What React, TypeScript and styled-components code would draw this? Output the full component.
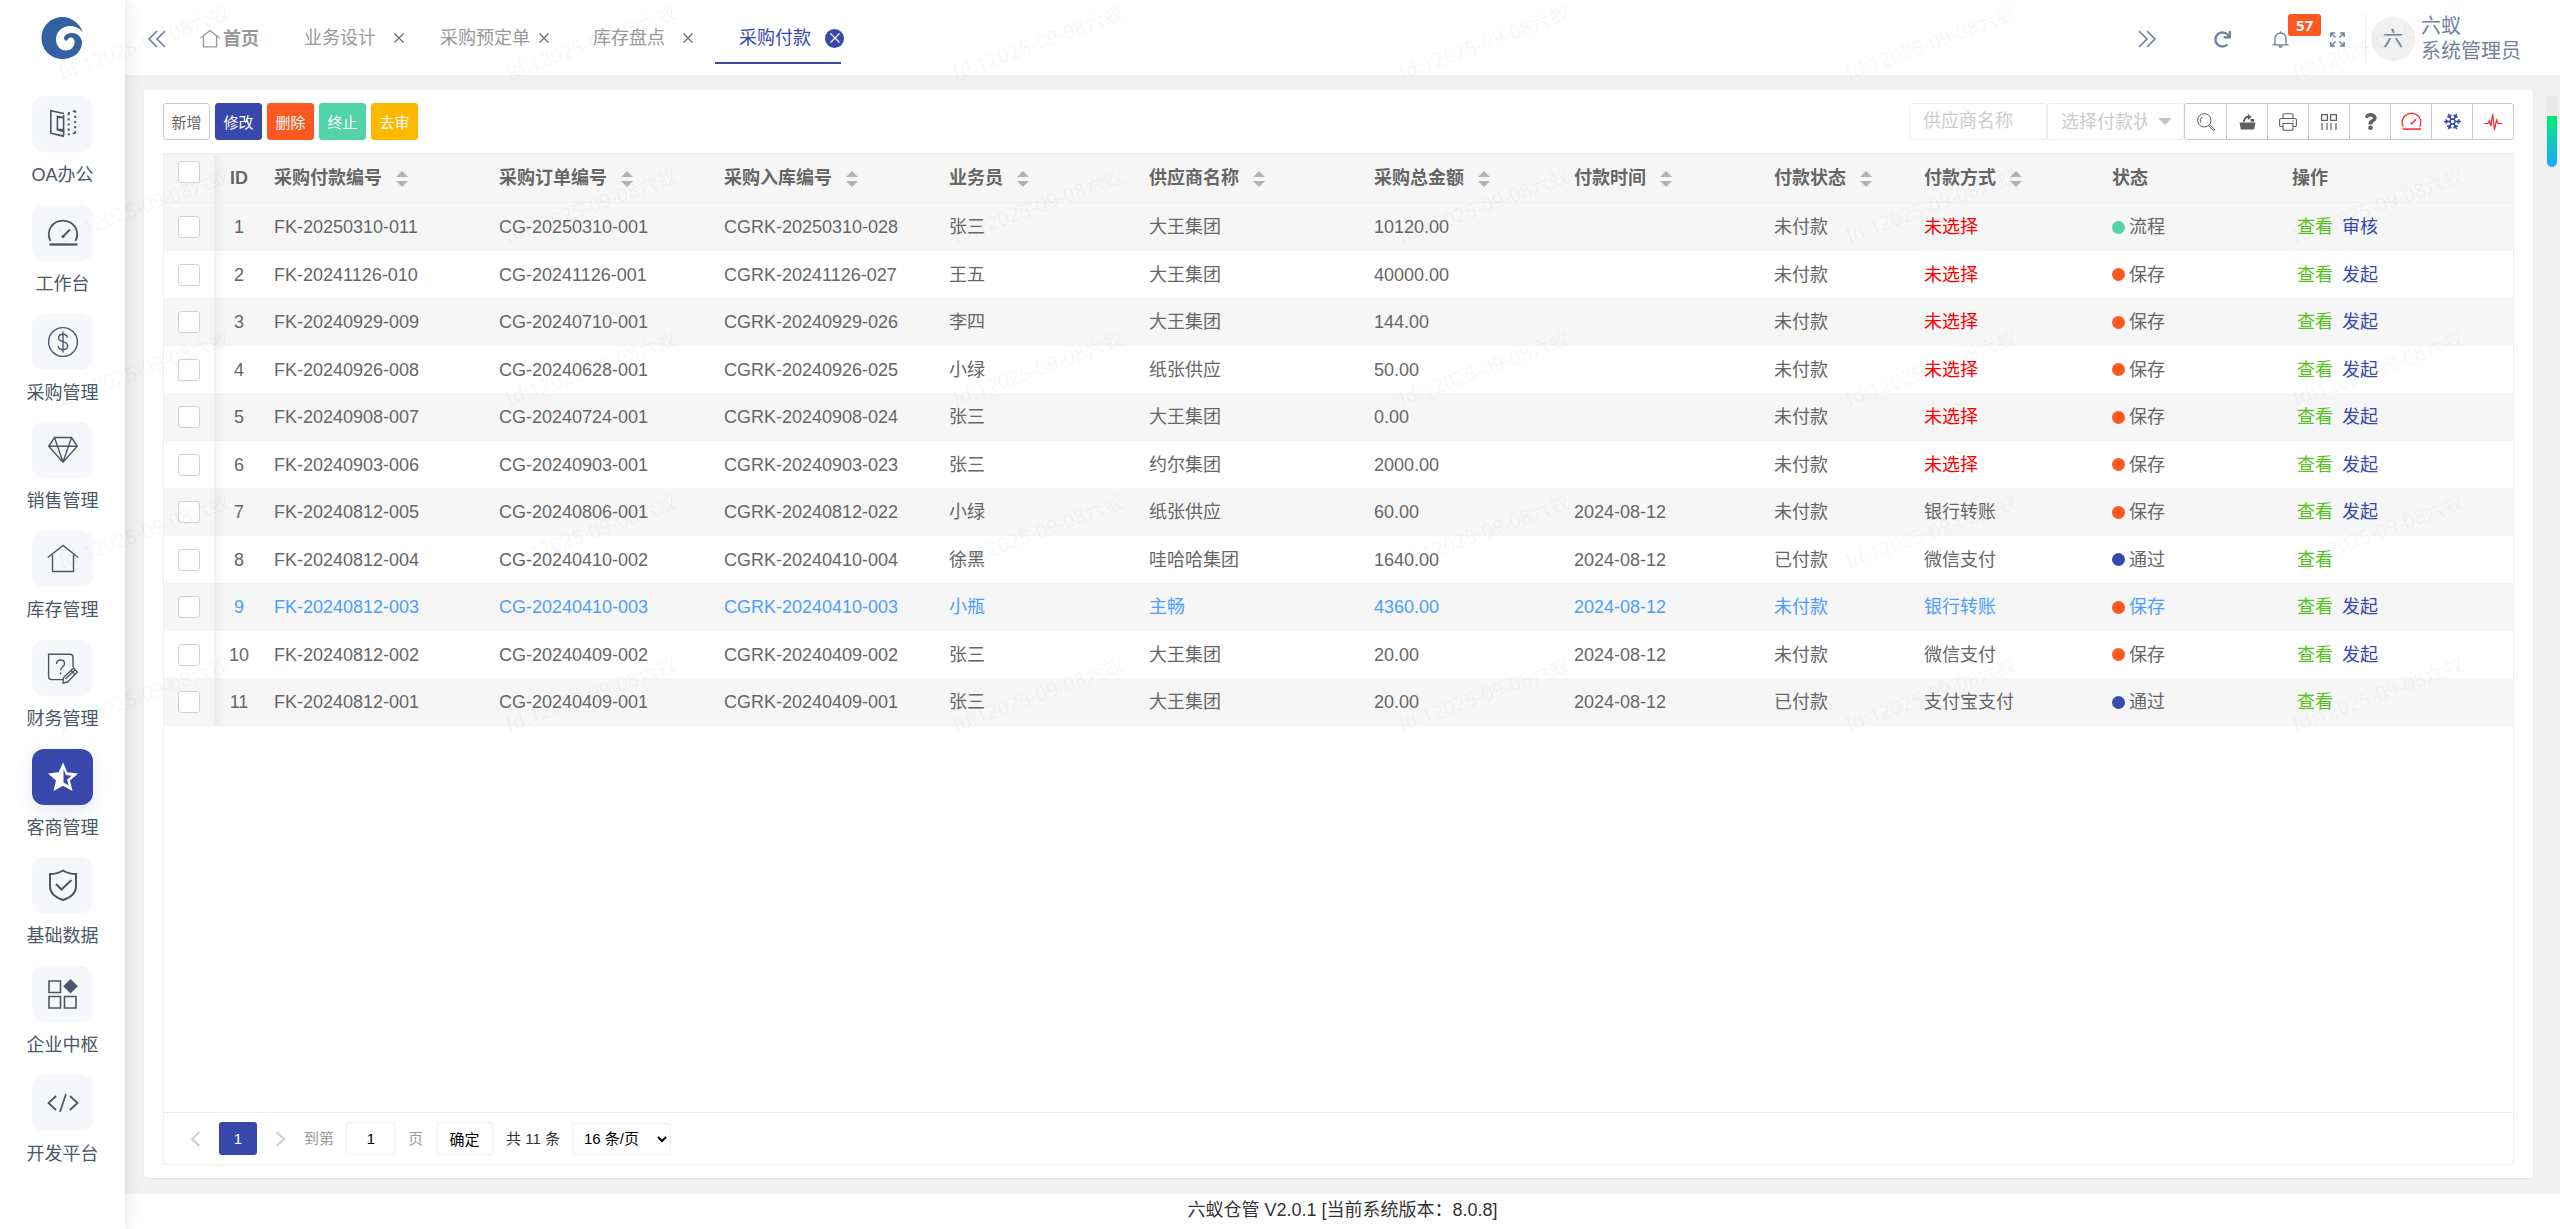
import React from "react";
import styled, { createGlobalStyle } from "styled-components";
import { FaQuestion, FaRedo } from "react-icons/fa";
import { Snowflake } from "lucide-react";

const color = {
  primary: "#3949ab",
  danger: "#ff5722",
  green: "#52d3aa",
  yellow: "#ffb800",
  text: "#666",
  muted: "#999",
  slate: "#74829c",
  ink: "#4b5768",
  line: "#eee",
  stripe: "#f6f6f6",
  page: "#f1f1f1",
};

const GlobalStyle = createGlobalStyle`
  *, *::before, *::after { box-sizing: border-box; }
  body {
    margin: 0;
    background: #fff;
    color: ${color.text};
    font-family: "Liberation Sans", "Noto Sans CJK SC", sans-serif;
    font-size: 18px;
    line-height: 26px;
  }
  button, input, select { font-family: inherit; margin: 0; }
  a { text-decoration: none; color: inherit; }
  svg { display: block; flex: none; }
`;

/* ---------- shell ---------- */

const Shell = styled.div`
  position: relative;
  display: flex;
  min-height: 100vh;
`;

const Sidebar = styled.aside`
  position: relative;
  z-index: 2;
  flex: none;
  width: 125px;
  display: flex;
  flex-direction: column;
  align-items: center;
  padding: 17px 0 62px;
  background: #fff;
  box-shadow: 2px 0 14px rgba(0, 0, 0, 0.1);
`;

const Nav = styled.nav`
  flex: 1;
  display: flex;
  flex-direction: column;
  justify-content: space-between;
  gap: 8px;
  margin-top: 37px;
`;

const NavItem = styled.a`
  display: flex;
  flex-direction: column;
  align-items: center;
  gap: 10px;
  color: ${color.ink};
`;

const NavTile = styled.span<{ $active: boolean }>`
  display: flex;
  align-items: center;
  justify-content: center;
  width: 61px;
  height: 56px;
  border-radius: 12px;
  background: ${(p) => (p.$active ? color.primary : "#f5f7fb")};
  color: ${(p) => (p.$active ? "#fff" : color.ink)};
  box-shadow: ${(p) => (p.$active ? "0 6px 16px rgba(57, 73, 171, 0.12)" : "none")};
`;

const Main = styled.div`
  flex: 1;
  min-width: 0;
  display: flex;
  flex-direction: column;
`;

/* ---------- header ---------- */

const Header = styled.header`
  position: relative;
  display: flex;
  align-items: center;
  height: 75px;
  padding: 3px 39px 0 23px;
  background: #fff;
  color: ${color.slate};
  box-shadow: 0 1px 2px rgba(0, 0, 0, 0.05);
`;

const PlainButton = styled.button`
  display: flex;
  padding: 0;
  border: 0;
  background: none;
  color: inherit;
  cursor: pointer;
`;

const HomeLink = styled.a`
  display: flex;
  align-items: center;
  gap: 3px;
  width: 80px;
  margin-left: 34px;
  font-weight: bold;
  color: ${color.muted};
`;

const TabStrip = styled.div`
  flex: 1;
  display: flex;
  height: 50px;
`;

const Tab = styled.div<{ $width: number; $gap: number; $active: boolean }>`
  display: flex;
  align-items: center;
  gap: ${(p) => p.$gap}px;
  width: ${(p) => p.$width}px;
  padding-left: 24px;
  white-space: nowrap;
  color: ${(p) => (p.$active ? color.primary : color.muted)};
  border-bottom: 2px solid ${(p) => (p.$active ? color.primary : "transparent")};
`;

const TabClose = styled.button<{ $active: boolean }>`
  flex: none;
  display: flex;
  align-items: center;
  justify-content: center;
  width: ${(p) => (p.$active ? 19 : 10)}px;
  height: 19px;
  padding: 0;
  border: 0;
  border-radius: 50%;
  background: ${(p) => (p.$active ? color.primary : "transparent")};
  color: ${(p) => (p.$active ? "#fff" : color.text)};
`;

const HeaderTools = styled.div`
  display: flex;
  align-items: center;
  margin-left: 58px;
`;

const BellWrap = styled.div`
  position: relative;
  margin: 0 41px;
`;

const Badge = styled.span`
  position: absolute;
  left: 16px;
  top: -17px;
  width: 33px;
  border-radius: 3px;
  background: ${color.danger};
  color: #fff;
  font: bold 15px/22px "Noto Sans", sans-serif;
  text-align: center;
`;

const UserBox = styled.div`
  display: flex;
  align-items: center;
  gap: 6px;
  margin-left: 20px;
  padding-left: 5px;
  border-left: 1px solid ${color.line};
  height: 50px;
  font-size: 20px;
  line-height: 25px;
`;

const Avatar = styled.span`
  width: 44px;
  border-radius: 50%;
  background: ${color.page};
  line-height: 44px;
  text-align: center;
`;

/* ---------- content ---------- */

const Content = styled.main`
  position: relative;
  flex: 1;
  display: flex;
  padding: 15px 27px 16px 19px;
  background: ${color.page};
`;

const Card = styled.section`
  flex: 1;
  min-width: 0;
  display: flex;
  flex-direction: column;
  gap: 13px;
  padding: 13px 19px;
  border-radius: 3px;
  background: #fff;
  box-shadow: 0 1px 2px rgba(0, 0, 0, 0.06);
`;

const ScrollTrack = styled.div`
  position: absolute;
  top: 20px;
  right: 3px;
  width: 10px;
  height: 72px;
  padding-top: 21px;
  border-radius: 5px;
  background: #e9e9e9;
`;

const ScrollThumb = styled.div`
  height: 51px;
  border-radius: 0 0 5px 5px;
  background: linear-gradient(#00ef70, #1aa7ff);
`;

const Toolbar = styled.div`
  display: flex;
  justify-content: space-between;
`;

const Actions = styled.div`
  display: flex;
  gap: 5px;
`;

const ActionButton = styled.button<{ $fill?: string }>`
  width: 47px;
  height: 37px;
  padding: 0;
  border: 1px solid ${(p) => p.$fill || "#c9c9c9"};
  border-radius: 3px;
  background: ${(p) => p.$fill || "#fff"};
  color: ${(p) => (p.$fill ? "#fff" : color.text)};
  font-size: 15px;
`;

const Filters = styled.div`
  display: flex;
`;

const FilterInput = styled.input`
  width: 138px;
  height: 37px;
  padding: 0 13px;
  border: 1px solid ${color.line};
  border-radius: 3px;
  font-size: 18px;
  color: ${color.text};
  &::placeholder { color: #ccc; }
`;

const FilterSelectBox = styled.div`
  position: relative;
  display: flex;
  align-items: center;
`;

const FilterSelect = styled.select`
  appearance: none;
  width: 137px;
  height: 37px;
  padding: 0 36px 0 13px;
  border: 1px solid ${color.line};
  border-radius: 3px;
  background: #fff;
  font-size: 18px;
  color: #ccc;
`;

const Caret = styled.span`
  position: absolute;
  right: 12px;
  border: 7px solid transparent;
  border-top-color: #c2c2c2;
  border-bottom: 0;
  pointer-events: none;
`;

const IconGroup = styled.div`
  display: flex;
  border: 1px solid #c9c9c9;
  border-radius: 3px;
`;

const IconButton = styled.button<{ $tone?: string }>`
  display: flex;
  align-items: center;
  justify-content: center;
  width: 41px;
  height: 35px;
  padding: 0;
  border: 0;
  background: none;
  color: ${(p) => p.$tone || "#5f5f5f"};
  & + & { border-left: 1px solid #c9c9c9; }
`;

/* ---------- table ---------- */

const TablePanel = styled.div`
  flex: 1;
  display: flex;
  flex-direction: column;
  border: 1px solid ${color.line};
`;

const TableScroll = styled.div`
  flex: 1;
  overflow-x: auto;
`;

const Table = styled.table`
  width: 100%;
  min-width: 2200px;
  table-layout: fixed;
  border-spacing: 0;
`;

const Row = styled.tr<{ $hot?: boolean }>`
  height: 47px;
  color: ${(p) => (p.$hot ? "#4d9dff" : "inherit")};
  &:nth-child(odd) { height: 48px; background: ${color.stripe}; }
`;

const HeadCell = styled.th`
  height: 49px;
  padding: 0 10px;
  background: ${color.stripe};
  border-bottom: 1px solid ${color.line};
  text-align: left;
  white-space: nowrap;
`;

const Cell = styled.td`
  padding: 0 10px;
  white-space: nowrap;
`;

const pinned = `
  position: relative;
  padding: 0 14px;
  &::after {
    content: "";
    position: absolute;
    top: 0;
    bottom: 0;
    left: 100%;
    width: 10px;
    background: linear-gradient(to right, rgba(0, 0, 0, 0.05), transparent);
  }
`;

const PinnedHead = styled(HeadCell)`
  ${pinned}
  padding-top: 7px;
  vertical-align: top;
`;

const PinnedCell = styled(Cell)`
  ${pinned}
`;

const IdHead = styled(HeadCell)`
  text-align: center;
`;

const IdCell = styled(Cell)`
  text-align: center;
`;

const Check = styled.input`
  appearance: none;
  display: block;
  width: 22px;
  height: 22px;
  margin: 0;
  border: 1px solid #d2d2d2;
  border-radius: 3px;
  background: #fff;
`;

const HeadLabel = styled.span`
  display: flex;
  align-items: center;
  gap: 14px;
`;

const SortButton = styled.button`
  display: flex;
  flex-direction: column;
  gap: 4px;
  padding: 2px 0 0;
  border: 0;
  background: none;
  &::before, &::after { content: ""; border: 6px solid transparent; }
  &::before { border-top: 0; border-bottom-color: #b2b2b2; }
  &::after { border-bottom: 0; border-top-color: #b2b2b2; }
`;

const Unset = styled.span`
  color: red;
`;

const Status = styled.span<{ $dot: string }>`
  display: flex;
  align-items: center;
  gap: 4px;
  &::before {
    content: "";
    width: 13px;
    height: 13px;
    border-radius: 50%;
    background: ${(p) => p.$dot};
  }
`;

const RowLinks = styled.span`
  display: flex;
  gap: 9px;
  padding-left: 5px;
`;

const RowLink = styled.a<{ $tone: string }>`
  color: ${(p) => p.$tone};
`;

/* ---------- pager ---------- */

const Pager = styled.div`
  display: flex;
  align-items: center;
  height: 52px;
  padding-left: 26px;
  border-top: 1px solid ${color.line};
  font-size: 15px;
  color: #333;
`;

const PageStep = styled(PlainButton)`
  color: #ccc;
`;

const PageNumber = styled.button`
  width: 38px;
  height: 33px;
  margin: 0 18px;
  padding: 0;
  border: 0;
  border-radius: 3px;
  background: ${color.primary};
  color: #fff;
  font-size: 15px;
`;

const JumpLabel = styled.label`
  display: flex;
  align-items: center;
  gap: 12px;
  margin: 0 13px 0 18px;
  color: ${color.muted};
`;

const JumpInput = styled.input`
  width: 50px;
  height: 33px;
  padding: 0;
  border: 1px solid ${color.line};
  border-radius: 3px;
  font-size: 15px;
  text-align: center;
`;

const JumpButton = styled.button`
  width: 57px;
  height: 33px;
  margin-right: 13px;
  padding: 0;
  border: 1px solid ${color.line};
  border-radius: 3px;
  background: #fff;
  color: #000;
  font-size: 15px;
`;

const SizeSelect = styled.select`
  width: 99px;
  height: 32px;
  margin-left: 12px;
  padding: 0 0 0 7px;
  border: 1px solid ${color.line};
  border-radius: 3px;
  background: #fff;
  color: #000;
  font-size: 15px;
`;

const Footer = styled.footer`
  height: 35px;
  color: #333;
  line-height: 33px;
  text-align: center;
`;

/* ---------- watermark ---------- */

const WatermarkLayer = styled.div`
  position: absolute;
  z-index: 3;
  top: 30px;
  left: 52px;
  right: 90px;
  display: grid;
  row-gap: 137px;
  pointer-events: none;
`;

const WatermarkRow = styled.div`
  display: flex;
  justify-content: space-between;
`;

const WatermarkText = styled.span`
  width: 184px;
  height: 26px;
  white-space: nowrap;
  font: 20px/26px "Noto Sans", "Noto Sans CJK SC", sans-serif;
  text-align: center;
  color: rgba(0, 0, 0, 0.045);
  transform: rotate(-20deg);
`;

/* ---------- icons ---------- */

type IconProps = { size?: number; box?: number; width?: number; children: React.ReactNode };

const Stroke = ({ size = 32, box = 32, width = 1.4, children }: IconProps) => (
  <svg width={size} height={size} viewBox={`0 0 ${box} ${box}`} fill="none" stroke="currentColor" strokeWidth={width} aria-hidden="true">
    {children}
  </svg>
);

const Logo = () => (
  <svg width="43" height="42" viewBox="0 0 42 42" role="img" aria-label="六蚁">
    <path
      fill="#3262a3"
      d="M41.5 15.5C38 6 30 0 21 0C9 0 0 9.5 0 21C0 33 9.5 42 21 42C32 42 40 35 40.5 26C40.5 20 36 16 30.5 16C26 16 22.5 18.5 22.5 21C22.5 23 24 24 25.5 23.5C26 22 27.500 20.500 29.500 20.500C32 20.500 33.500 23 33 26C32.500 30.500 29 33.500 24.500 33.500C19 33.500 14.500 29 14.500 22.500C14.500 14.500 21 9 28.500 9C34 9 38.500 11.500 41.500 15.500Z"
    />
  </svg>
);

const DoorIcon = () => (
  <Stroke width={1.6}>
    <path d="M17 5.5L3.8 2.8V25.2L17 28.4M3.8 25.2L17 28M16.6 7V28M16.6 9.5H10.4V21.5H16.6M16.6 9.5L10.4 8.5V22L16.6 23.6" />
    <path d="M21.7 5V27M28.2 2.5V26" strokeDasharray="2.2 3" strokeWidth="2" />
    <path d="M21 5.2L28 2.8M21 26.6L28 25" strokeDasharray="2 3" />
  </Stroke>
);

const GaugeIcon = ({ size = 32 }: { size?: number }) => (
  <Stroke size={size} width={1.8}>
    <path d="M3.5 24C-1.5 14 5.5 3.6 16 3.6S33.5 14 28.5 24" />
    <path d="M2.5 27.5H30.5" strokeWidth="2.3" />
    <path d="M16.5 19L23 12.5" strokeWidth="2" />
    <circle cx="16" cy="19.5" r="1.6" fill="currentColor" stroke="none" />
  </Stroke>
);

const DollarIcon = () => (
  <Stroke>
    <circle cx="16" cy="16" r="14.4" />
    <path d="M20.5 11.5C20 9.3 18.3 8.3 16 8.3C13.4 8.3 11.6 9.7 11.6 11.9C11.6 16.6 20.7 14.5 20.7 19.8C20.7 22.2 18.7 23.7 16 23.7C13.3 23.7 11.5 22.3 11.2 19.9M16 5.5V26.5" />
  </Stroke>
);

const DiamondIcon = () => (
  <Stroke>
    <path d="M7.5 3.5H24.5L30.3 12.3L16 28.3L1.7 12.3ZM1.7 12.3H30.3M7.5 3.5L10.5 12.3L16 28M24.5 3.5L21.5 12.3L16 28" />
  </Stroke>
);

const HouseIcon = ({ size = 32, width = 1.4 }: { size?: number; width?: number }) => (
  <Stroke size={size} width={width}>
    <path d="M.8 14.5L16 2.5L31.2 14.5M5.5 12V28.5H26.5V12" />
  </Stroke>
);

const FinanceIcon = () => (
  <Stroke>
    <path d="M17 27.6H4.5A3 3 0 0 1 1.6 24.6V2.2H23A3 3 0 0 1 26 5.2V15" />
    <path d="M9.5 12C9.5 9.5 11 8 13.5 8S17.5 9.6 17.5 11.7C17.5 14.8 13.6 14.8 13.6 18.5M13.6 20.5V22.5" />
    <path d="M16.5 25.5L26.5 16L30.3 20L20.5 30L16 31ZM18.5 27L27.5 18.2M24 18.5L28 22.5" />
  </Stroke>
);

const StarHalfIcon = () => (
  <svg width="32" height="32" viewBox="0 0 32 32" aria-hidden="true">
    <path
      fill="currentColor"
      fillRule="evenodd"
      d="M16 1.5L20.3 11.3L31 12.4L23 19.6L25.5 30L16 24.7L6.5 30L9 19.6L1 12.4L11.7 11.3ZM16.5 8V21.5L21.5 24.2L20.2 18.6L24.6 14.7L18.8 14Z"
    />
  </svg>
);

const ShieldIcon = () => (
  <Stroke width={2}>
    <path d="M16 1.5C19.5 3.7 24 5 29 5V17.5C29 24 23.5 28.5 16 31C8.5 28.5 3 24 3 17.5V5C8 5 12.5 3.7 16 1.5Z" />
    <path d="M9 15L14.5 20.5L24.5 11" />
  </Stroke>
);

const BlocksIcon = () => (
  <Stroke width={1.6}>
    <path d="M2 3H13.5V14.5H2ZM2 18.5H13.5V30H2ZM17.5 18.5H29V30H17.5Z" />
    <path d="M23.5 1L30.8 8.3L23.5 15.6L16.2 8.3Z" fill="currentColor" stroke="none" />
  </Stroke>
);

const CodeIcon = () => (
  <Stroke width={1.8}>
    <path d="M9 9L1.5 16L9 23M23 9L30.5 16L23 23M19 7L13 25" />
  </Stroke>
);

const DoubleChevron = ({ flip }: { flip?: boolean }) => (
  <Stroke size={18} box={18}>
    <path d={flip ? "M1 1L9 9L1 17M9 1L17 9L9 17" : "M9 1L1 9L9 17M17 1L9 9L17 17"} strokeWidth="1.7" />
  </Stroke>
);

const Cross = () => (
  <Stroke size={10} box={10} width={1.1}>
    <path d="M.5.5L9.5 9.5M9.5.5L.5 9.5" />
  </Stroke>
);

const BellIcon = () => (
  <Stroke size={17} box={17} width={1.4}>
    <path d="M3 13.5V7.5A5.5 5.5 0 0 1 14 7.5V13.5M.3 13.9H16.7M8.5 2V.3" />
    <path d="M6 14.5H11L9.7 16.7H7.3Z" fill="currentColor" stroke="none" />
  </Stroke>
);

const FullscreenIcon = () => (
  <Stroke size={15} box={15} width={1.5}>
    <path d="M.9 5V.9H5M10 .9H14.1V5M14.1 10V14.1H10M5 14.1H.9V10M1 1L5.5 5.5M14 1L9.5 5.5M14 14L9.5 9.5M1 14L5.5 9.5" />
  </Stroke>
);

const SearchIcon = () => (
  <Stroke size={18} box={18} width={1}>
    <circle cx="7.3" cy="7.3" r="6.7" />
    <path d="M4 9.5A4.3 4.3 0 0 1 5 4" />
    <path d="M12.2 13.3L13.3 12.2L17.3 16A.9.9 0 0 1 16 17.4Z" />
  </Stroke>
);

const ExportIcon = () => (
  <svg width="17" height="17" viewBox="0 0 17 17" fill="currentColor" aria-hidden="true">
    <path d="M.5 9.5H16.5L15.2 16.5H1.800ZM4 8.8V6.5H5.5V8.8ZM11.5 8.8V6H15V8.8ZM5 7C5 4 6.5 2.8 9 2.8V.7L12.5 4L9 7V5C7.3 5 6.3 5.8 6 8.8H5Z" />
  </svg>
);

const PrintIcon = () => (
  <Stroke size={18} box={18} width={1.1}>
    <path d="M4 5.5V1.7A1 1 0 0 1 5 .7H13A1 1 0 0 1 14 1.7V5.5M4 13.5H2A1.4 1.4 0 0 1 .6 12V7A1.4 1.4 0 0 1 2 5.5H16A1.4 1.4 0 0 1 17.4 7V12A1.4 1.4 0 0 1 16 13.5H14M4 10.5H14V16.3A1 1 0 0 1 13 17.3H5A1 1 0 0 1 4 16.3ZM13.5 8H15" />
  </Stroke>
);

const ColumnsIcon = () => (
  <Stroke size={18} box={18} width={1.2}>
    <path d="M1.6 1.6H7.4V7.4H1.6ZM10.6 1.6H16.4V7.4H10.6ZM2 10V17M7 10V17M11 10V17M16 10V17" />
  </Stroke>
);

const PulseIcon = () => (
  <Stroke size={18} box={18} width={1.2}>
    <path d="M0 10.5H4L5.5 8L7 13L8.7 1L10.5 17L12.5 7L14 10.5H18" />
  </Stroke>
);

const Chevron = ({ flip }: { flip?: boolean }) => (
  <svg width="11" height="16" viewBox="0 0 11 16" fill="none" stroke="currentColor" strokeWidth="1.8" aria-hidden="true">
    <path d={flip ? "M1.5 1L9 8L1.5 15" : "M9.5 1L2 8L9.5 15"} />
  </svg>
);

/* ---------- data ---------- */

const navItems = [
  { label: "OA办公", icon: <DoorIcon /> },
  { label: "工作台", icon: <GaugeIcon /> },
  { label: "采购管理", icon: <DollarIcon /> },
  { label: "销售管理", icon: <DiamondIcon /> },
  { label: "库存管理", icon: <HouseIcon /> },
  { label: "财务管理", icon: <FinanceIcon /> },
  { label: "客商管理", icon: <StarHalfIcon />, active: true },
  { label: "基础数据", icon: <ShieldIcon /> },
  { label: "企业中枢", icon: <BlocksIcon /> },
  { label: "开发平台", icon: <CodeIcon /> },
];

const tabs = [
  { label: "业务设计", width: 136, gap: 18 },
  { label: "采购预定单", width: 153, gap: 9 },
  { label: "库存盘点", width: 146, gap: 18 },
  { label: "采购付款", width: 126, gap: 14, active: true },
];

const actions = [
  { label: "新增" },
  { label: "修改", fill: color.primary },
  { label: "删除", fill: color.danger },
  { label: "终止", fill: color.green },
  { label: "去审", fill: color.yellow },
];

const tools = [
  { label: "搜索", icon: <SearchIcon /> },
  { label: "导出", icon: <ExportIcon /> },
  { label: "打印", icon: <PrintIcon /> },
  { label: "筛选列", icon: <ColumnsIcon /> },
  { label: "帮助", icon: <FaQuestion size={17} /> },
  { label: "仪表盘", icon: <GaugeIcon size={21} />, tone: "#f22" },
  { label: "冻结", icon: <Snowflake size={19} />, tone: color.primary },
  { label: "监控", icon: <PulseIcon />, tone: "#f22" },
];

const sortable = [
  { label: "采购付款编号", width: 225 },
  { label: "采购订单编号", width: 225 },
  { label: "采购入库编号", width: 225 },
  { label: "业务员", width: 200 },
  { label: "供应商名称", width: 225 },
  { label: "采购总金额", width: 200 },
  { label: "付款时间", width: 200 },
  { label: "付款状态", width: 150 },
  { label: "付款方式", width: 188 },
];

const dots: Record<string, string> = { 流程: color.green, 保存: color.danger, 通过: color.primary };

const rows = [
  ["FK-20250310-011", "CG-20250310-001", "CGRK-20250310-028", "张三", "大王集团", "10120.00", "", "未付款", "", "流程", "审核"],
  ["FK-20241126-010", "CG-20241126-001", "CGRK-20241126-027", "王五", "大王集团", "40000.00", "", "未付款", "", "保存", "发起"],
  ["FK-20240929-009", "CG-20240710-001", "CGRK-20240929-026", "李四", "大王集团", "144.00", "", "未付款", "", "保存", "发起"],
  ["FK-20240926-008", "CG-20240628-001", "CGRK-20240926-025", "小绿", "纸张供应", "50.00", "", "未付款", "", "保存", "发起"],
  ["FK-20240908-007", "CG-20240724-001", "CGRK-20240908-024", "张三", "大王集团", "0.00", "", "未付款", "", "保存", "发起"],
  ["FK-20240903-006", "CG-20240903-001", "CGRK-20240903-023", "张三", "约尔集团", "2000.00", "", "未付款", "", "保存", "发起"],
  ["FK-20240812-005", "CG-20240806-001", "CGRK-20240812-022", "小绿", "纸张供应", "60.00", "2024-08-12", "未付款", "银行转账", "保存", "发起"],
  ["FK-20240812-004", "CG-20240410-002", "CGRK-20240410-004", "徐黑", "哇哈哈集团", "1640.00", "2024-08-12", "已付款", "微信支付", "通过", ""],
  ["FK-20240812-003", "CG-20240410-003", "CGRK-20240410-003", "小瓶", "主畅", "4360.00", "2024-08-12", "未付款", "银行转账", "保存", "发起"],
  ["FK-20240812-002", "CG-20240409-002", "CGRK-20240409-002", "张三", "大王集团", "20.00", "2024-08-12", "未付款", "微信支付", "保存", "发起"],
  ["FK-20240812-001", "CG-20240409-001", "CGRK-20240409-001", "张三", "大王集团", "20.00", "2024-08-12", "已付款", "支付宝支付", "通过", ""],
];

const hotRow = 8;

/* ---------- parts ---------- */

const SideNav = () => (
  <Sidebar>
    <Logo />
    <Nav>
      {navItems.map((item) => (
        <NavItem key={item.label} href="#">
          <NavTile $active={!!item.active}>{item.icon}</NavTile>
          {item.label}
        </NavItem>
      ))}
    </Nav>
  </Sidebar>
);

const TopBar = () => (
  <Header>
    <PlainButton aria-label="向左滚动"><DoubleChevron /></PlainButton>
    <HomeLink href="#"><HouseIcon size={20} width={2.2} />首页</HomeLink>
    <TabStrip>
      {tabs.map((tab) => (
        <Tab key={tab.label} $width={tab.width} $gap={tab.gap} $active={!!tab.active}>
          {tab.label}
          <TabClose $active={!!tab.active} aria-label={`关闭${tab.label}`}><Cross /></TabClose>
        </Tab>
      ))}
    </TabStrip>
    <PlainButton aria-label="向右滚动"><DoubleChevron flip /></PlainButton>
    <HeaderTools>
      <PlainButton aria-label="刷新"><FaRedo size={17} /></PlainButton>
      <BellWrap>
        <PlainButton aria-label="消息"><BellIcon /></PlainButton>
        <Badge>57</Badge>
      </BellWrap>
      <PlainButton aria-label="全屏"><FullscreenIcon /></PlainButton>
      <UserBox>
        <Avatar>六</Avatar>
        <div>
          <div>六蚁</div>
          <div>系统管理员</div>
        </div>
      </UserBox>
    </HeaderTools>
  </Header>
);

const TableTools = () => (
  <Toolbar>
    <Actions>
      {actions.map((a) => (
        <ActionButton key={a.label} $fill={a.fill}>{a.label}</ActionButton>
      ))}
    </Actions>
    <Filters>
      <FilterInput placeholder="供应商名称" aria-label="供应商名称" />
      <FilterSelectBox>
        <FilterSelect aria-label="选择付款状态" defaultValue="">
          <option value="">选择付款状态</option>
          <option>未付款</option>
          <option>已付款</option>
        </FilterSelect>
        <Caret />
      </FilterSelectBox>
      <IconGroup>
        {tools.map((t) => (
          <IconButton key={t.label} $tone={t.tone} aria-label={t.label}>{t.icon}</IconButton>
        ))}
      </IconGroup>
    </Filters>
  </Toolbar>
);

const PaymentTable = () => (
  <Table>
    <colgroup>
      <col width={50} />
      <col width={50} />
      {sortable.map((c) => <col key={c.label} width={c.width} />)}
      <col width={180} />
      <col />
    </colgroup>
    <thead>
      <tr>
        <PinnedHead><Check type="checkbox" aria-label="全选" /></PinnedHead>
        <IdHead>ID</IdHead>
        {sortable.map((c) => (
          <HeadCell key={c.label}>
            <HeadLabel>{c.label}<SortButton aria-label={`按${c.label}排序`} /></HeadLabel>
          </HeadCell>
        ))}
        <HeadCell>状态</HeadCell>
        <HeadCell>操作</HeadCell>
      </tr>
    </thead>
    <tbody>
      {rows.map((r, i) => (
        <Row key={r[0]} $hot={i === hotRow}>
          <PinnedCell><Check type="checkbox" aria-label={`选择 ${r[0]}`} /></PinnedCell>
          <IdCell>{i + 1}</IdCell>
          {r.slice(0, 8).map((value, k) => <Cell key={k}>{value}</Cell>)}
          <Cell>{r[8] || <Unset>未选择</Unset>}</Cell>
          <Cell><Status $dot={dots[r[9]]}>{r[9]}</Status></Cell>
          <Cell>
            <RowLinks>
              <RowLink href="#" $tone="#52c41a">查看</RowLink>
              {r[10] && <RowLink href="#" $tone={color.primary}>{r[10]}</RowLink>}
            </RowLinks>
          </Cell>
        </Row>
      ))}
    </tbody>
  </Table>
);

const PagerBar = () => (
  <Pager>
    <PageStep aria-label="上一页"><Chevron /></PageStep>
    <PageNumber>1</PageNumber>
    <PageStep aria-label="下一页"><Chevron flip /></PageStep>
    <JumpLabel>到第<JumpInput defaultValue="1" />页</JumpLabel>
    <JumpButton>确定</JumpButton>
    共 11 条
    <SizeSelect aria-label="每页条数" defaultValue="16 条/页">
      <option>16 条/页</option>
      <option>32 条/页</option>
    </SizeSelect>
  </Pager>
);

const Watermark = () => (
  <WatermarkLayer aria-hidden="true">
    {[0, 1, 2, 3, 4].map((row) => (
      <WatermarkRow key={row}>
        {[0, 1, 2, 3, 4, 5].map((col) => (
          <WatermarkText key={col}>Id:12025-09-08六蚁</WatermarkText>
        ))}
      </WatermarkRow>
    ))}
  </WatermarkLayer>
);

export default function App() {
  return (
    <>
      <GlobalStyle />
      <Shell>
        <SideNav />
        <Main>
          <TopBar />
          <Content>
            <Card>
              <TableTools />
              <TablePanel>
                <TableScroll><PaymentTable /></TableScroll>
                <PagerBar />
              </TablePanel>
            </Card>
            <ScrollTrack><ScrollThumb /></ScrollTrack>
          </Content>
          <Footer>六蚁仓管 V2.0.1 [当前系统版本：8.0.8]</Footer>
        </Main>
        <Watermark />
      </Shell>
    </>
  );
}
